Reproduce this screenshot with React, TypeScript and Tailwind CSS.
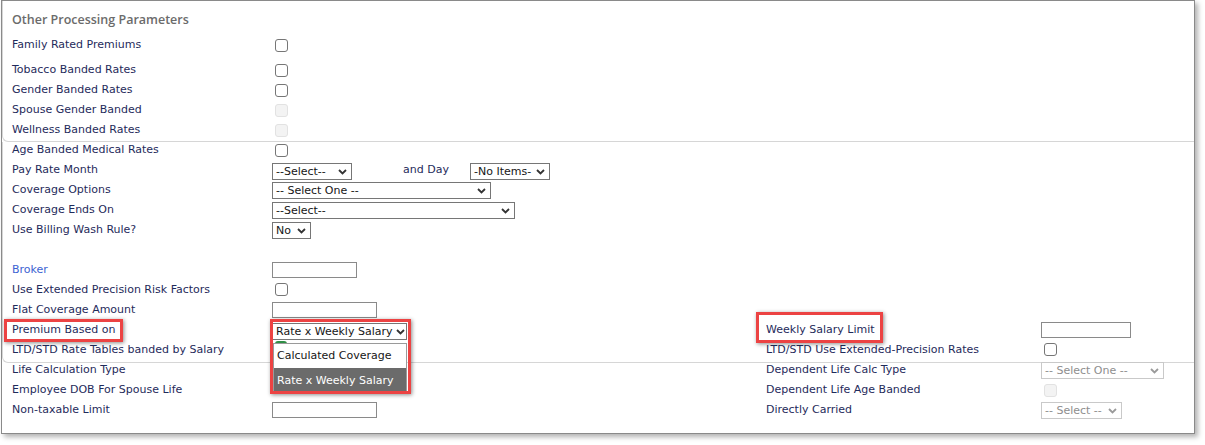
import React from "react";

const labelCls = "w-[269px] shrink-0 pl-[9px] leading-[15px] text-[#1f2b5b]";

function Chevron({ disabled }: { disabled?: boolean }) {
  return (
    <svg width="9" height="6" viewBox="0 0 9 6" className="shrink-0">
      <polyline
        points="1,1 4.5,4.5 8,1"
        fill="none"
        stroke={disabled ? "#9a9a9a" : "#333"}
        strokeWidth="1.8"
      />
    </svg>
  );
}

function Select({
  value,
  className = "",
  disabled,
}: {
  value: string;
  className?: string;
  disabled?: boolean;
}) {
  return (
    <div
      className={`flex h-[17px] items-center justify-between gap-1 border pl-[3px] pr-[4px] text-[11px] leading-none ${
        disabled ? "border-[#c9c9c9] text-[#8e8e8e]" : "border-[#767676] text-[#161616]"
      } ${className}`}
    >
      <span className="whitespace-nowrap">{value}</span>
      <Chevron disabled={disabled} />
    </div>
  );
}

function Checkbox({ disabled, className = "mt-[2px]" }: { disabled?: boolean; className?: string }) {
  return (
    <div
      className={`ml-[3px] h-[13px] w-[13px] rounded-[3px] border ${
        disabled ? "border-[#e2e2e2] bg-[#f3f3f3]" : "border-[#767676] bg-white"
      } ${className}`}
    />
  );
}

function TextBox({ className = "" }: { className?: string }) {
  return <div className={`h-[16px] border border-[#8a8a8a] bg-white ${className}`} />;
}

function Row({
  label,
  children,
  h = "h-5",
  right,
  rightControl,
}: {
  label?: React.ReactNode;
  children?: React.ReactNode;
  h?: string;
  right?: React.ReactNode;
  rightControl?: React.ReactNode;
}) {
  return (
    <div className={`flex items-start ${h}`}>
      <div className={labelCls}>{label}</div>
      <div className="flex w-[494px] shrink-0 items-start">{children}</div>
      <div className="w-[275px] shrink-0 leading-[15px] text-[#1f2b5b]">{right}</div>
      <div className="flex items-start">{rightControl}</div>
    </div>
  );
}

function RedBox({ className }: { className: string }) {
  return (
    <span
      className={`pointer-events-none absolute border-[3px] border-[#ec4343] shadow-[1px_1px_4px_rgba(0,0,0,0.45)] ${className}`}
    />
  );
}

export default function App() {
  return (
    <div
      className="min-h-[445px] bg-white text-[11px]"
      style={{ fontFamily: '"DejaVu Sans", Verdana, sans-serif' }}
    >
      <div className="ml-px h-[434px] w-[1194px] border border-[#8a8a8a] shadow-[3px_3px_5px_rgba(0,0,0,0.3)]">
        {/* section 1 */}
        <div className="rounded-bl-[6px] border-b border-l border-[#d6d6d6] pt-[9px]">
          <div
            className="pl-[9px] text-[12.5px] font-semibold leading-[20px] text-[#6b6b6b]"
            style={{ fontFamily: '"Open Sans", "Noto Sans", sans-serif' }}
          >
            Other Processing Parameters
          </div>
          <div className="mt-[7px]">
            <Row label="Family Rated Premiums" h="h-[25px]">
              <Checkbox />
            </Row>
            <Row label="Tobacco Banded Rates">
              <Checkbox />
            </Row>
            <Row label="Gender Banded Rates">
              <Checkbox />
            </Row>
            <Row label="Spouse Gender Banded">
              <Checkbox disabled />
            </Row>
            <Row label="Wellness Banded Rates" h="h-[19px]">
              <Checkbox disabled />
            </Row>
          </div>
        </div>

        {/* section 2 */}
        <div className="rounded-bl-[6px] border-b border-l border-[#d6d6d6]">
          <Row label="Age Banded Medical Rates">
            <Checkbox />
          </Row>
          <Row label="Pay Rate Month">
            <Select value="--Select--" className="mt-px w-[80px]" />
            <span className="ml-[51px] w-[67px] leading-[15px] text-[#1f2b5b]">and Day</span>
            <Select value="-No Items-" className="mt-px w-[80px]" />
          </Row>
          <Row label="Coverage Options">
            <Select value="-- Select One --" className="w-[219px]" />
          </Row>
          <Row label="Coverage Ends On">
            <Select value="--Select--" className="w-[243px]" />
          </Row>
          <Row label="Use Billing Wash Rule?">
            <Select value="No" className="w-[39px]" />
          </Row>
          <Row />
          <Row label={<span className="text-[#3c63d2]">Broker</span>}>
            <TextBox className="w-[85px]" />
          </Row>
          <Row label="Use Extended Precision Risk Factors">
            <Checkbox className="mt-px" />
          </Row>
          <Row label="Flat Coverage Amount">
            <TextBox className="w-[105px]" />
          </Row>
          <Row
            label={
              <span className="relative">
                Premium Based on
                <RedBox className="-left-[8px] -top-[4px] h-[23px] w-[119px]" />
              </span>
            }
            right={
              <span className="relative">
                Weekly Salary Limit
                <RedBox className="-left-[10px] -top-[11px] h-[31px] w-[127px]" />
              </span>
            }
            rightControl={<TextBox className="w-[90px]" />}
          >
            <div className="relative z-10 mt-px">
              <Select value="Rate x Weekly Salary" className="w-[135px] bg-white" />
              <div className="absolute left-px top-[20px] w-[134px] border border-[#9a9a9a] bg-white text-[11px]">
                <div className="h-[24px] pl-[3px] leading-[24px] text-[#161616]">Calculated Coverage</div>
                <div className="h-[25px] bg-[#6b6b6b] pl-[3px] leading-[25px] text-white">Rate x Weekly Salary</div>
              </div>
              <RedBox className="-left-[2px] -top-[4px] h-[75px] w-[141px]" />
            </div>
          </Row>
          <Row
            label="LTD/STD Rate Tables banded by Salary"
            right="LTD/STD Use Extended-Precision Rates"
            rightControl={<Checkbox className="mt-px" />}
          >
            <div className="ml-[3px] -mt-px h-[13px] w-[12px] rounded-[3px] border-t-2 border-[#2f8f46]" />
          </Row>
        </div>

        {/* section 3 */}
        <div className="-mt-px border-l border-transparent">
          <Row
            label="Life Calculation Type"
            right="Dependent Life Calc Type"
            rightControl={<Select value="-- Select One --" disabled className="w-[123px]" />}
          />
          <Row
            label="Employee DOB For Spouse Life"
            right="Dependent Life Age Banded"
            rightControl={<Checkbox disabled className="mt-[2px]" />}
          />
          <Row
            label="Non-taxable Limit"
            right="Directly Carried"
            rightControl={<Select value="-- Select --" disabled className="w-[81px]" />}
          >
            <TextBox className="w-[105px]" />
          </Row>
        </div>
      </div>
    </div>
  );
}
